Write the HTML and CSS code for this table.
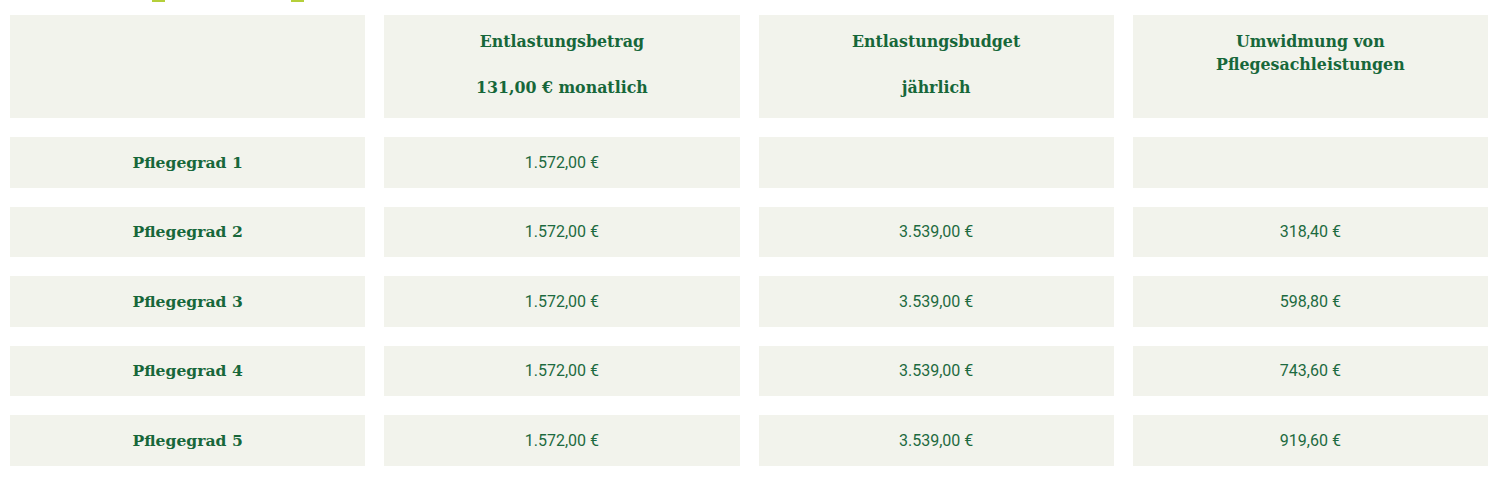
FILE: index.html
```html
<!DOCTYPE html>
<html lang="de">
<head>
<meta charset="utf-8">
<link rel="stylesheet" href="styles.css">
</head>
<body>
<div class="topmarks"><span class="mark m1"></span><span class="mark m2"></span></div>
<div class="table">
  <div class="cell head"></div>
  <div class="cell head"><p>Entlastungsbetrag</p><p>131,00 € monatlich</p></div>
  <div class="cell head"><p>Entlastungsbudget</p><p>jährlich</p></div>
  <div class="cell head"><p>Umwidmung von<br>Pflegesachleistungen</p></div>

  <div class="cell label">Pflegegrad 1</div>
  <div class="cell val">1.572,00 €</div>
  <div class="cell val"></div>
  <div class="cell val"></div>

  <div class="cell label">Pflegegrad 2</div>
  <div class="cell val">1.572,00 €</div>
  <div class="cell val">3.539,00 €</div>
  <div class="cell val">318,40 €</div>

  <div class="cell label">Pflegegrad 3</div>
  <div class="cell val">1.572,00 €</div>
  <div class="cell val">3.539,00 €</div>
  <div class="cell val">598,80 €</div>

  <div class="cell label">Pflegegrad 4</div>
  <div class="cell val">1.572,00 €</div>
  <div class="cell val">3.539,00 €</div>
  <div class="cell val">743,60 €</div>

  <div class="cell label">Pflegegrad 5</div>
  <div class="cell val">1.572,00 €</div>
  <div class="cell val">3.539,00 €</div>
  <div class="cell val">919,60 €</div>
</div>
</body>
</html>
```
FILE: styles.css
```css
html, body { margin: 0; padding: 0; background: #fff; }
body { padding: 0 12px 0 10px; }
.topmarks { height: 15px; position: relative; }
.mark { position: absolute; top: 0; height: 2px; width: 13px; background: #b5cf3a; }
.m1 { left: 142px; }
.m2 { left: 281px; }
.table {
  display: grid;
  grid-template-columns: repeat(4, 1fr);
  column-gap: 19px;
  row-gap: 19px;
  grid-template-rows: 103px repeat(5, 50.5px);
}
.cell {
  background: #f2f3ec;
  color: #17673a;
  text-align: center;
}
.head {
  font-family: "DejaVu Serif", serif;
  font-weight: bold;
  font-size: 15.8px;
  line-height: 23px;
  padding-top: 15px;
}
.head p { margin: 0 0 23px; }
.label {
  font-family: "DejaVu Serif", serif;
  font-weight: bold;
  font-size: 15.6px;
  display: flex; align-items: center; justify-content: center;
}
.val {
  font-family: Roboto, sans-serif;
  font-size: 16px;
  color: #1d6a40;
  display: flex; align-items: center; justify-content: center;
}
```
